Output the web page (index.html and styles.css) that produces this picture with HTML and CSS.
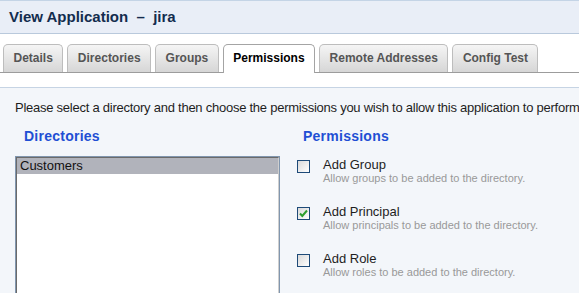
FILE: index.html
```html
<!DOCTYPE html>
<html>
<head>
<meta charset="utf-8">
<link rel="stylesheet" href="styles.css">
</head>
<body>
<div class="titlebar"><h1>View Application&nbsp; –&nbsp; jira</h1></div>
<div class="tabs">
  <div class="tab">Details</div>
  <div class="tab">Directories</div>
  <div class="tab">Groups</div>
  <div class="tab active">Permissions</div>
  <div class="tab">Remote Addresses</div>
  <div class="tab">Config Test</div>
</div>
<div class="content">
  <p class="intro">Please select a directory and then choose the permissions you wish to allow this application to perform</p>
  <div class="cols">
    <div class="col-left">
      <h2 class="heading">Directories</h2>
      <div class="listbox">
        <div class="listinner">
          <div class="option selected">Customers</div>
        </div>
      </div>
    </div>
    <div class="col-right">
      <h2 class="heading">Permissions</h2>
      <div class="perm">
        <span class="cb"></span>
        <div class="ptext">
          <div class="plabel">Add Group</div>
          <div class="pdesc">Allow groups to be added to the directory.</div>
        </div>
      </div>
      <div class="perm">
        <span class="cb checked"><svg width="11" height="11" viewBox="0 0 11 11"><path d="M2 5.5 L4.3 8 L9 2.5" fill="none" stroke="#2e9e2e" stroke-width="2"/></svg></span>
        <div class="ptext">
          <div class="plabel">Add Principal</div>
          <div class="pdesc">Allow principals to be added to the directory.</div>
        </div>
      </div>
      <div class="perm">
        <span class="cb"></span>
        <div class="ptext">
          <div class="plabel">Add Role</div>
          <div class="pdesc">Allow roles to be added to the directory.</div>
        </div>
      </div>
    </div>
  </div>
</div>
</body>
</html>
```

FILE: styles.css
```css
html, body {
  margin: 0;
  padding: 0;
  background: #ffffff;
  font-family: "Liberation Sans", Arial, sans-serif;
  overflow: hidden;
}
.titlebar {
  background: #e9eef7;
  border-top: 1px solid #c4d4e6;
  border-bottom: 1px solid #b9c9dc;
  height: 32px;
  padding-left: 9px;
}
.titlebar h1 {
  margin: 0;
  font-size: 15px;
  line-height: 32px;
  font-weight: bold;
  color: #132c4e;
  white-space: nowrap;
}
.tabs {
  margin-top: 10px;
  display: flex;
  gap: 4px;
  padding-left: 3px;
  border-bottom: 1px solid #9c9c9c;
  height: 28px;
  align-items: flex-start;
}
.tab {
  height: 27px;
  line-height: 27px;
  padding: 0 9.5px;
  border: 1px solid #bdbdbd;
  border-bottom: none;
  border-radius: 5px 5px 0 0;
  background: linear-gradient(#f5f5f5, #d6d6d6);
  font-size: 12px;
  font-weight: bold;
  color: #555555;
  white-space: nowrap;
}
.tab.active {
  height: 28px;
  background: #ffffff;
  border-color: #a4a4a4;
  color: #000000;
}
.content {
  margin-top: 14px;
  background: #f3f6fa;
  border-top: 1px solid #c6d4e4;
  padding: 12px 0 0 15px;
  height: 193px;
  overflow: hidden;
}
.intro {
  margin: 0;
  font-size: 13px;
  line-height: 15px;
  color: #1e1e1e;
  white-space: nowrap;
  letter-spacing: -0.25px;
}
.cols {
  display: flex;
  gap: 17px;
  margin-top: 13px;
}
.col-left {
  width: 265px;
}
.heading {
  margin: 0;
  font-size: 14px;
  line-height: 16px;
  font-weight: bold;
  color: #1f4fd4;
  letter-spacing: 0.25px;
}
.col-left .heading {
  padding-left: 9px;
}
.col-right .heading {
  padding-left: 6px;
  margin-bottom: 13px;
}
.listbox {
  margin-top: 12px;
  border: 1px solid #8196ae;
  border-bottom: none;
  background: #ffffff;
  height: 137px;
}
.listinner {
  border-top: 1px solid #6a6a6a;
  border-left: 1px solid #6a6a6a;
  border-right: 1px solid #cfcfcf;
  height: 136px;
}
.option {
  font-size: 13px;
  line-height: 16px;
  padding-left: 3px;
  color: #111111;
}
.option.selected {
  background: #b1b3bb;
}
.perm {
  display: flex;
  gap: 13px;
  margin-bottom: 19px;
}
.cb {
  box-sizing: border-box;
  width: 13px;
  height: 13px;
  margin-top: 2.5px;
  border: 1px solid #1d4a78;
  background: linear-gradient(135deg, #d9d9d9, #ffffff);
  display: flex;
  align-items: center;
  justify-content: center;
  flex: none;
}
.cb svg {
  display: block;
}
.plabel {
  font-size: 13px;
  line-height: 15px;
  color: #1e1e1e;
}
.pdesc {
  font-size: 11px;
  line-height: 13px;
  color: #999999;
}
```
